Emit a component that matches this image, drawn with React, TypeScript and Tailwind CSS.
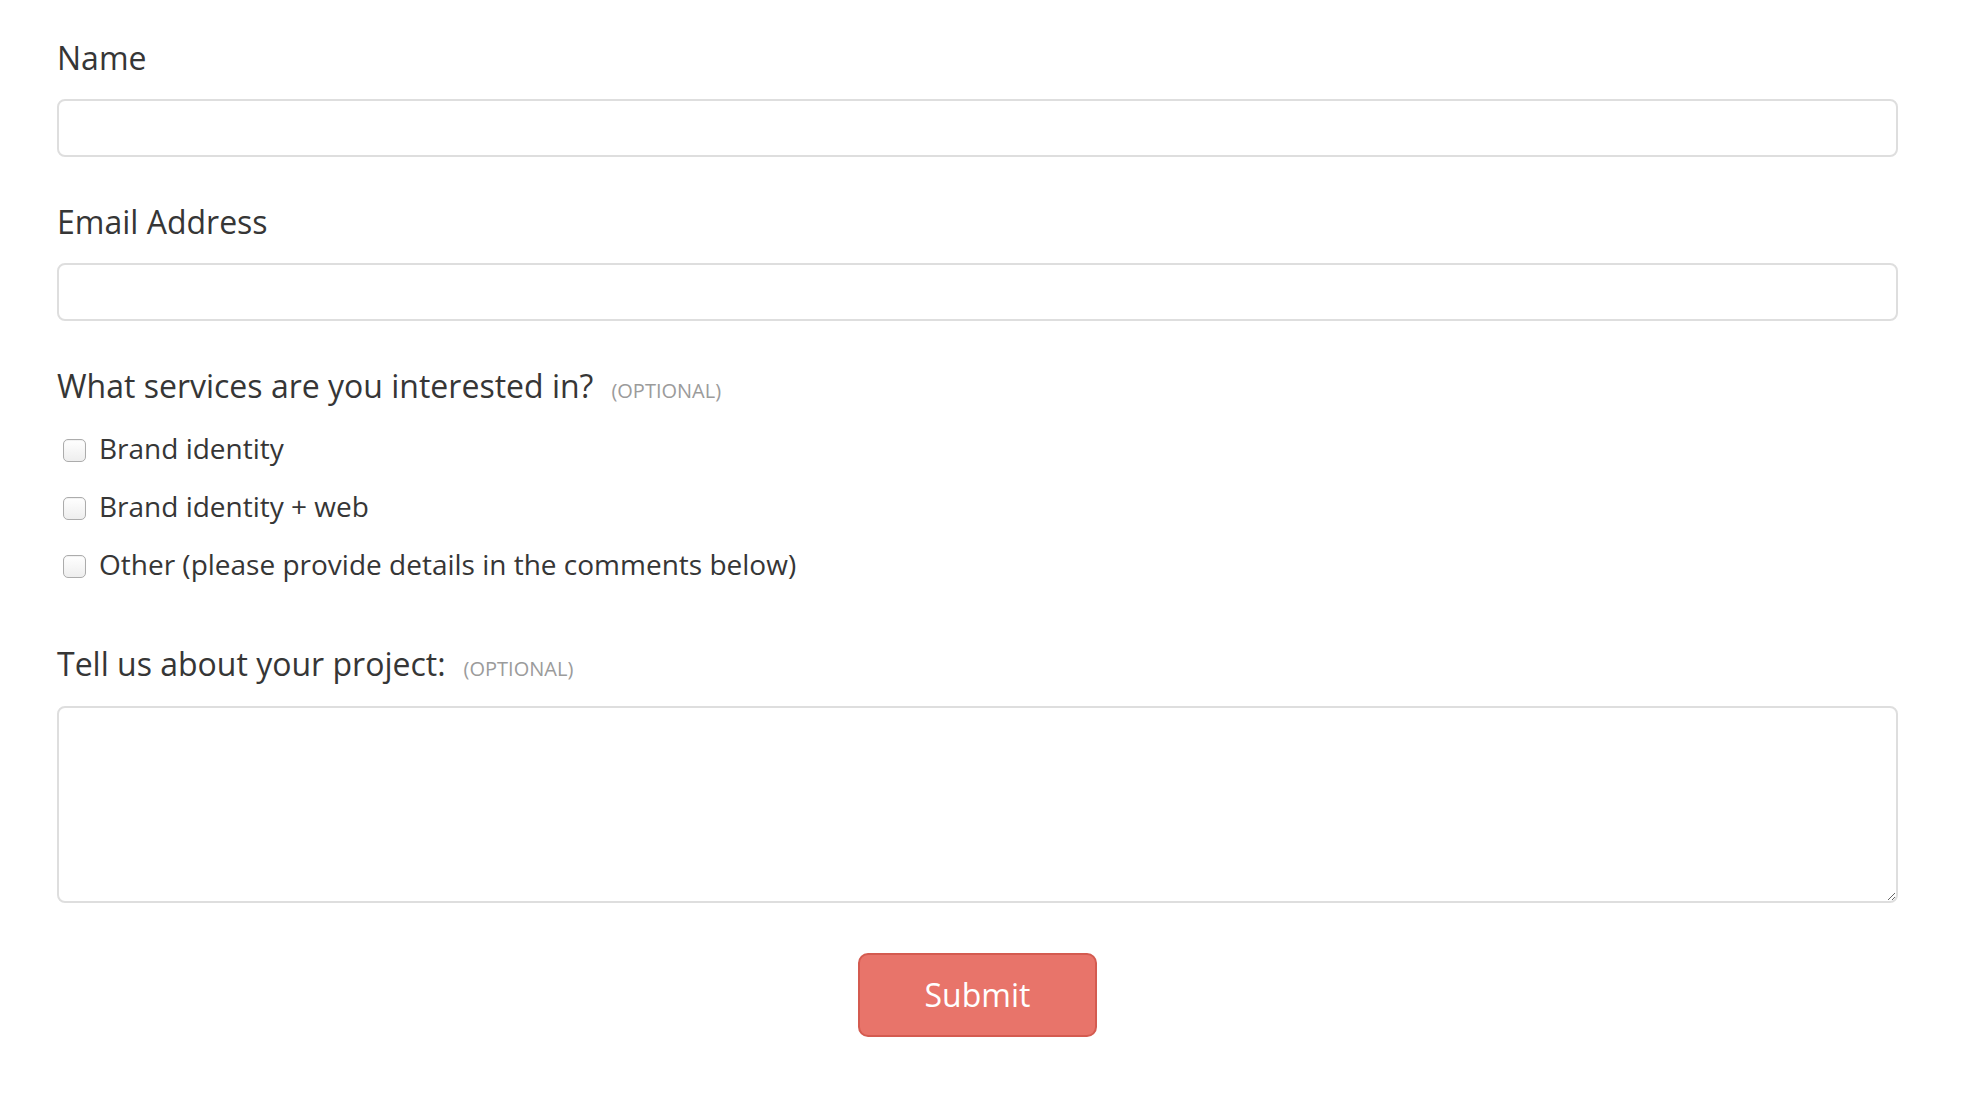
const services = [
  "Brand identity",
  "Brand identity + web",
  "Other (please provide details in the comments below)",
]

function Label({ text, optional }: { text: string; optional?: boolean }) {
  return (
    <div className="flex h-[44px] items-baseline gap-[18px] text-[32px] leading-[44px] text-[#363636]">
      <span>{text}</span>
      {optional && <span className="text-[20px] leading-[20px] text-[#9b9b9b]">(OPTIONAL)</span>}
    </div>
  )
}

function TextInput({ type = "text" }: { type?: string }) {
  return (
    <input
      type={type}
      className="mt-[19px] block h-[58px] w-full rounded-[8px] border-2 border-[#dedede] bg-white px-4 text-[28px] outline-none"
    />
  )
}

export default function App() {
  return (
    <div
      className="min-h-screen bg-white pl-[57px] pr-[66px] pt-[36px]"
      style={{ fontFamily: '"Open Sans", "Noto Sans", sans-serif' }}
    >
      <form className="flex flex-col">
        <div>
          <Label text="Name" />
          <TextInput />
        </div>

        <div className="mt-[43px]">
          <Label text="Email Address" />
          <TextInput type="email" />
        </div>

        <div className="mt-[43px]">
          <Label text="What services are you interested in?" optional />
          <div className="mt-[11px] flex flex-col">
            {services.map((s) => (
              <label key={s} className="flex h-[58px] items-start text-[28px] leading-[58px] text-[#363636]">
                <input
                  type="checkbox"
                  className="ml-[6px] mt-[20px] h-[23px] w-[23px] shrink-0 appearance-none rounded-[5px] border border-[#acacac] bg-gradient-to-b from-white to-[#eeeeee] shadow-[inset_0_1px_1px_rgba(0,0,0,0.06)]"
                />
                <span className="ml-[13px]">{s}</span>
              </label>
            ))}
          </div>
        </div>

        <div className="mt-[49px]">
          <Label text="Tell us about your project:" optional />
          <textarea className="mt-[20px] block h-[197px] w-full rounded-[8px] border-2 border-[#dedede] bg-white p-3 text-[28px] outline-none" />
        </div>

        <div className="mt-[50px] flex justify-center pb-10">
          <button
            type="button"
            className="h-[84px] w-[239px] rounded-[10px] border-2 border-[#d45b50] bg-[#e8746a] text-[32px] text-white"
          >
            Submit
          </button>
        </div>
      </form>
    </div>
  )
}
